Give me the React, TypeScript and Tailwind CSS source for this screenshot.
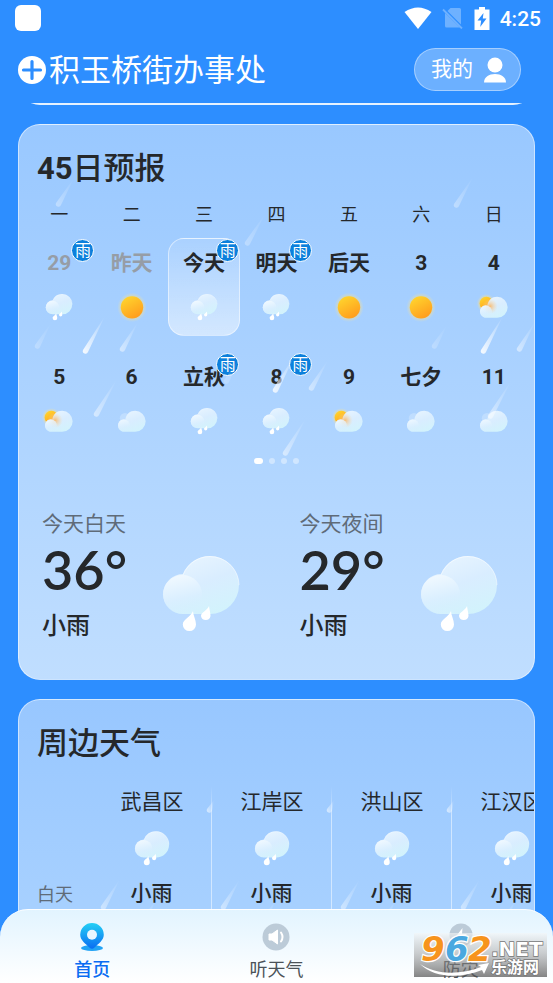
import { useId, useState } from 'react';
import clsx from 'clsx';

type Weather = 'rain' | 'sun' | 'partly' | 'cloudy';

interface Day {
  label: string;
  weather: Weather;
  alert?: boolean;
  past?: boolean;
  today?: boolean;
}

interface Streak {
  x: number;
  y: number;
  dx: number;
  dy: number;
  opacity: number;
}

const weekdays = ['一', '二', '三', '四', '五', '六', '日'];

const days: Day[] = [
  { label: '29', weather: 'rain', alert: true, past: true },
  { label: '昨天', weather: 'sun', past: true },
  { label: '今天', weather: 'rain', alert: true, today: true },
  { label: '明天', weather: 'rain', alert: true },
  { label: '后天', weather: 'sun' },
  { label: '3', weather: 'sun' },
  { label: '4', weather: 'partly' },
  { label: '5', weather: 'partly' },
  { label: '6', weather: 'cloudy' },
  { label: '立秋', weather: 'rain', alert: true },
  { label: '8', weather: 'rain', alert: true },
  { label: '9', weather: 'partly' },
  { label: '七夕', weather: 'cloudy' },
  { label: '11', weather: 'cloudy' },
];

const halves = [
  { title: '今天白天', temp: '36°', text: '小雨' },
  { title: '今天夜间', temp: '29°', text: '小雨' },
];

const districts = ['武昌区', '江岸区', '洪山区', '江汉区'];

const forecastStreaks: Streak[] = [
  { x: 40, y: 80, dx: 15, dy: 27, opacity: 0.35 },
  { x: 229, y: 119, dx: 17, dy: 30, opacity: 0.3 },
  { x: 438, y: 81, dx: 16, dy: 29, opacity: 0.35 },
  { x: 19, y: 222, dx: 13, dy: 24, opacity: 0.25 },
  { x: 67, y: 227, dx: 19, dy: 36, opacity: 0.9 },
  { x: 104, y: 225, dx: 15, dy: 28, opacity: 0.5 },
  { x: 416, y: 222, dx: 12, dy: 22, opacity: 0.25 },
  { x: 465, y: 227, dx: 19, dy: 36, opacity: 0.9 },
  { x: 501, y: 225, dx: 15, dy: 28, opacity: 0.5 },
  { x: 78, y: 290, dx: 20, dy: 36, opacity: 0.5 },
  { x: 208, y: 257, dx: 13, dy: 24, opacity: 0.2 },
  { x: 257, y: 266, dx: 19, dy: 36, opacity: 0.8 },
  { x: 293, y: 264, dx: 16, dy: 29, opacity: 0.45 },
  { x: 267, y: 329, dx: 20, dy: 36, opacity: 0.5 },
  { x: 472, y: 292, dx: 20, dy: 36, opacity: 0.5 },
];

const nearbyStreaks: Streak[] = [82, 202, 322, 442].flatMap((x) => [
  { x: x + 3, y: 208, dx: 16, dy: 29, opacity: 0.45 },
  { x: x + 43, y: 222, dx: 12, dy: 22, opacity: 0.4 },
  { x: x + 109, y: 111, dx: 4, dy: 11, opacity: 0.6 },
]);

function Rain({ streaks }: { streaks: Streak[] }) {
  const id = useId();
  return (
    <svg aria-hidden="true" className="pointer-events-none absolute inset-0 h-full w-full">
      <defs>
        <linearGradient id={id} x1="0" y1="1" x2="1" y2="0">
          <stop offset="0" stopColor="#fff" />
          <stop offset="1" stopColor="#fff" stopOpacity="0" />
        </linearGradient>
      </defs>
      {streaks.map((s) => (
        <path
          key={`${s.x}-${s.y}`}
          d={`M${s.x - 3} ${s.y - 2}L${s.x + s.dx} ${s.y - s.dy}L${s.x + 2} ${s.y}A2.6 2.6 0 0 1 ${s.x - 3} ${s.y - 2}Z`}
          fill={`url(#${id})`}
          opacity={s.opacity}
        />
      ))}
    </svg>
  );
}

function WeatherIcon({ type, className }: { type: Weather; className?: string }) {
  const id = useId();
  const url = (name: string) => `url(#${id}${name})`;

  return (
    <svg viewBox="2 0 80 80" aria-hidden="true" className={clsx('overflow-visible', className)}>
      <defs>
        <linearGradient id={`${id}back`} x1="0.2" y1="0" x2="0.7" y2="1">
          <stop offset="0" stopColor="#e9f5ff" />
          <stop offset="0.5" stopColor="#d9edff" />
          <stop offset="1" stopColor="#d2f3fc" />
        </linearGradient>
        <linearGradient id={`${id}front`} x1="0.35" y1="0" x2="0.6" y2="1">
          <stop offset="0" stopColor="#f1f9ff" />
          <stop offset="0.6" stopColor="#daefff" stopOpacity="0.9" />
          <stop offset="1" stopColor="#d2f1fd" stopOpacity="0" />
        </linearGradient>
        <linearGradient id={`${id}sun`} x1="0.2" y1="0" x2="0.75" y2="1">
          <stop offset="0" stopColor="#ffd62e" />
          <stop offset="1" stopColor="#ff9a1c" />
        </linearGradient>
        <radialGradient id={`${id}glow`}>
          <stop offset="0.6" stopColor="#ffd75e" stopOpacity="0.7" />
          <stop offset="1" stopColor="#ffe9a0" stopOpacity="0" />
        </radialGradient>
        <radialGradient id={`${id}warm`}>
          <stop offset="0" stopColor="#fbb560" stopOpacity="0.85" />
          <stop offset="1" stopColor="#fbd9a8" stopOpacity="0" />
        </radialGradient>
      </defs>

      {type === 'sun' && (
        <>
          <circle cx="42" cy="41" r="42" fill={url('glow')} />
          <circle cx="42" cy="41" r="32" fill={url('sun')} />
        </>
      )}

      {type === 'rain' && (
        <>
          <path
            d="M51 3A29 29 0 1 1 51 61H24A20 20 0 1 1 24.500 21Q27 21 24 21A29 29 0 0 1 51 3Z"
            fill={url('back')}
          />
          <circle cx="23.500" cy="41.500" r="19.500" fill={url('front')} />
          <path d="M24 22A29 29 0 0 1 80 32" fill="none" stroke="#fff" strokeOpacity="0.5" />
          <path d="M34 58C34 62 37 67 37 71.500A6.600 6.600 0 0 1 23.800 71.500C23.800 66 32 64 34 58Z" fill="#fff" />
          <path d="M50 53C50.500 57 51.500 60 51.500 63A4.800 4.800 0 0 1 42 63C42 59 48 58 50 53Z" fill="#fff" />
        </>
      )}

      {(type === 'partly' || type === 'cloudy') && (
        <>
          {type === 'partly' && (
            <>
              <circle cx="20" cy="30" r="27" fill={url('glow')} />
              <circle cx="20" cy="30" r="19" fill={url('sun')} />
            </>
          )}
          {type === 'cloudy' && <circle cx="22" cy="32" r="15" fill="#d2e8ff" fillOpacity="0.5" />}
          <path
            d="M51 11A30 30 0 0 1 51 71H20A18.500 18.500 0 0 1 4 44A17 17 0 0 1 23 36C26 20 36 11 51 11Z"
            fill={url('back')}
          />
          {type === 'partly' && <circle cx="31" cy="38" r="22" fill={url('warm')} />}
          <circle cx="19" cy="53" r="17" fill={url('front')} fillOpacity="0.8" />
        </>
      )}
    </svg>
  );
}

function StatusBar() {
  return (
    <div className="flex h-9 shrink-0 items-center justify-between pr-3 pl-[15px]">
      <span className="size-[26px] rounded-md bg-white" />
      <div className="flex items-center text-white">
        <svg viewBox="0 0 28 22" className="mr-2.5 h-[22px] w-7" fill="currentColor" aria-hidden="true">
          <path d="M14 22L.5 5Q14-4 27.500 5Z" />
        </svg>
        <svg viewBox="0 0 22 22" className="mr-2.5 size-[22px]" aria-hidden="true">
          <path d="M8.500 1H17.500Q19 1 19 2.500V17.500L5.500 4ZM3 6L18 20.500H4.500Q3 20.500 3 19Z" fill="#6eb1ff" />
          <path d="M1 2.500L20 21.500" stroke="#6eb1ff" strokeWidth="1.800" />
        </svg>
        <svg viewBox="0 0 16 23" className="mr-2.5 h-[23px] w-4" aria-hidden="true">
          <path d="M5 0H11V2.500H15.500V23H.5V2.500H5Z" fill="#fff" />
          <path d="M9.500 6L3.500 13.500H7.200L6.200 20L12.500 11.500H8.800Z" fill="#2d8eff" />
        </svg>
        <span className="pt-0.5 text-[21px] leading-6 font-medium">4:25</span>
      </div>
    </div>
  );
}

function Header() {
  return (
    <header className="flex h-[67px] shrink-0 items-center justify-between pr-8 pl-[18px]">
      <button type="button" className="flex items-center gap-[3px] text-white">
        <svg viewBox="0 0 28 28" className="size-7" aria-hidden="true">
          <circle cx="14" cy="14" r="14" fill="#fff" />
          <path d="M14 5.500V22.500M5.500 14H22.500" stroke="#2d8eff" strokeWidth="3.200" strokeLinecap="round" />
        </svg>
        <span className="pt-0.5 text-[31px] leading-10">积玉桥街办事处</span>
      </button>
      <button
        type="button"
        className="flex h-[43px] items-center gap-2.5 rounded-full border border-white/40 bg-white/30 pr-[13px] pl-4 text-[21px] text-white"
      >
        我的
        <svg viewBox="0 0 24 26" className="h-[26px] w-6" fill="currentColor" aria-hidden="true">
          <circle cx="12" cy="8" r="7.500" />
          <path d="M1 25.500C1 20 6 17 12 17S23 20 23 25.500Z" />
        </svg>
      </button>
    </header>
  );
}

function DayCell({ day }: { day: Day }) {
  return (
    <button
      type="button"
      className={clsx(
        'relative flex h-[98px] flex-col items-center rounded-2xl border pt-2.5',
        day.today ? 'border-white/50 bg-linear-to-b from-white/10 to-white/50' : 'border-transparent'
      )}
    >
      <span
        className={clsx(
          'text-[21px] leading-7 font-bold whitespace-nowrap',
          day.past ? 'text-[#969da6]' : 'text-[#25282b]'
        )}
      >
        {day.label}
      </span>
      <WeatherIcon type={day.weather} className="mt-4 size-7" />
      {day.alert && (
        <span className="absolute top-0 right-0 flex size-[23px] items-center justify-center rounded-full border border-white bg-[#0c80dc] text-base leading-none text-white">
          雨
        </span>
      )}
    </button>
  );
}

function ForecastCard() {
  return (
    <section className="relative mx-[18px] mt-[19px] overflow-hidden rounded-[22px] border border-white/50 bg-linear-to-b from-[#99c8ff] to-[#c0deff] px-1 pt-6 pb-[37px]">
      <h2 className="pl-3.5 text-[31px] leading-10 font-medium">
        <span className="font-bold">45</span>日预报
      </h2>
      <div className="mt-3 grid grid-cols-7 text-center text-lg leading-7">
        {weekdays.map((name) => (
          <span key={name}>{name}</span>
        ))}
      </div>
      <div className="mt-[9px] grid grid-cols-7 gap-y-4">
        {days.map((day) => (
          <DayCell key={day.label} day={day} />
        ))}
      </div>
      <div className="mt-2 flex justify-center gap-1.5">
        <span className="h-1.5 w-[9px] rounded-full bg-white" />
        <span className="size-1.5 rounded-full bg-white/40" />
        <span className="size-1.5 rounded-full bg-white/40" />
        <span className="size-1.5 rounded-full bg-white/40" />
      </div>
      <div className="-mx-1 mt-[46px] grid grid-cols-2">
        {halves.map((half) => (
          <div key={half.title} className="flex items-end gap-[34px] pl-[23px]">
            <div>
              <p className="text-[21px] leading-7 text-[#5f6b78]">{half.title}</p>
              <p className="mt-0.5 font-[Lato,sans-serif] text-[54px] leading-[60px] font-semibold">{half.temp}</p>
              <p className="mt-2.5 text-2xl leading-8 font-medium">{half.text}</p>
            </div>
            <WeatherIcon type="rain" className="mb-[9px] size-20 shrink-0" />
          </div>
        ))}
      </div>
      <Rain streaks={forecastStreaks} />
    </section>
  );
}

function NearbyCard() {
  return (
    <section className="relative mx-[18px] mt-[19px] overflow-hidden rounded-[22px] border border-white/50 bg-linear-to-b from-[#98c7ff] to-[#add4ff] pt-6 pb-20">
      <h2 className="pl-[18px] text-[31px] leading-10 font-medium">周边天气</h2>
      <table className="mt-[22px] w-[553px] table-fixed border-separate border-spacing-0">
        <thead>
          <tr>
            <td className="w-[73px]" />
            {districts.map((name) => (
              <th
                key={name}
                scope="col"
                className="bg-[linear-gradient(to_bottom,transparent,rgba(255,255,255,0.5))] bg-[length:1px_100%] bg-right bg-no-repeat pt-0.5 text-[21px] leading-7 font-normal"
              >
                {name}
              </th>
            ))}
          </tr>
        </thead>
        <tbody>
          <tr>
            <th
              scope="row"
              className="pb-2 pl-[18px] text-left align-bottom text-lg leading-6 font-normal text-[#5f6b78]"
            >
              白天
            </th>
            {districts.map((name) => (
              <td key={name} className="border-r border-white/50 pt-3.5 pb-2 text-center">
                <WeatherIcon type="rain" className="mx-auto size-9" />
                <span className="mt-[13px] block text-[21px] leading-7 font-medium">小雨</span>
              </td>
            ))}
          </tr>
        </tbody>
      </table>
      <Rain streaks={nearbyStreaks} />
    </section>
  );
}

function HomeIcon() {
  return (
    <svg viewBox="0 0 28 30" className="h-[30px] w-7" aria-hidden="true">
      <defs>
        <linearGradient id="pin" x1="0" y1="0" x2="0" y2="1">
          <stop offset="0" stopColor="#24d0f5" />
          <stop offset="1" stopColor="#0a6cf2" />
        </linearGradient>
      </defs>
      <ellipse cx="14" cy="26" rx="11" ry="3" fill="#22a3f5" />
      <path
        d="M14 1A11.800 11.800 0 0 1 25.800 12.800C25.800 18.500 20 22 16.500 25.500Q14 28 11.500 25.500C8 22 2.200 18.500 2.200 12.800A11.800 11.800 0 0 1 14 1Z"
        fill="url(#pin)"
      />
      <circle cx="14" cy="12.800" r="5" fill="#e8f6ff" />
    </svg>
  );
}

function ListenIcon() {
  return (
    <svg viewBox="0 0 28 30" className="h-[30px] w-7" aria-hidden="true">
      <circle cx="14" cy="15" r="13.500" fill="#bccbd8" />
      <path d="M7 12H10L15.500 8V22L10 18H7Z" fill="#fff" stroke="#fff" strokeLinejoin="round" />
      <path d="M19 10.500Q22 15 19 19.500" stroke="#fff" strokeWidth="2" fill="none" strokeLinecap="round" />
    </svg>
  );
}

function DisasterIcon() {
  return (
    <svg viewBox="0 0 28 30" className="h-[30px] w-7" aria-hidden="true">
      <circle cx="14" cy="13" r="11.500" fill="#bccbd8" />
      <path d="M15.500 6L8.500 15H13L11.500 21.500L20 12H15Z" fill="#fff" />
    </svg>
  );
}

const tabs = [
  { name: '首页', Icon: HomeIcon },
  { name: '听天气', Icon: ListenIcon },
  { name: '防灾', Icon: DisasterIcon },
];

function TabBar() {
  const [active, setActive] = useState('首页');

  return (
    <nav className="relative z-10 -mt-8 grid h-[74px] shrink-0 grid-cols-3 rounded-t-[28px] border-t border-white bg-linear-to-b from-[#e2f4ff] to-white">
      {tabs.map(({ name, Icon }) => (
        <button
          key={name}
          type="button"
          onClick={() => setActive(name)}
          className={clsx(
            'flex flex-col items-center pt-3 text-lg leading-6',
            active === name ? 'font-medium text-[#0a6cf2]' : 'text-[#4b5258]'
          )}
        >
          <Icon />
          <span className="mt-1.5">{name}</span>
        </button>
      ))}
    </nav>
  );
}

function Watermark() {
  return (
    <svg
      viewBox="0 0 133 44"
      className="pointer-events-none absolute right-1.5 bottom-1.5 z-20 h-11 w-[133px]"
      aria-hidden="true"
    >
      <defs>
        <linearGradient id="plate" x1="0" y1="0" x2="0" y2="1">
          <stop offset="0" stopColor="#f4f6f7" stopOpacity="0.6" />
          <stop offset="0.45" stopColor="#a8a8a8" stopOpacity="0.55" />
          <stop offset="1" stopColor="#505050" stopOpacity="0.7" />
        </linearGradient>
      </defs>
      <rect width="133" height="44" fill="url(#plate)" />
      <path d="M6 31C22 42 46 42 67 34L64 32L75 30L70 41L68 37C46 46 20 45 6 31Z" fill="#fff" />
      <g
        className="font-['DejaVu_Sans',sans-serif] font-bold italic"
        fontSize="34"
        stroke="#fff"
        strokeWidth="2.500"
        paintOrder="stroke"
      >
        <text x="7" y="28" fill="#f7941d">9</text>
        <text x="31" y="28" fill="#4aa8e0">6</text>
        <text x="54" y="28" fill="#f7941d">2</text>
      </g>
      <g fill="#fff" stroke="#777" strokeWidth="1.500" paintOrder="stroke">
        <text x="77" y="23" fontSize="20" className="font-['DejaVu_Sans',sans-serif] font-bold">.NET</text>
        <text x="77" y="40" fontSize="16" className="font-['Noto_Sans_CJK_SC',sans-serif] font-bold">乐游网</text>
      </g>
    </svg>
  );
}

export default function App() {
  return (
    <div className="relative flex h-screen flex-col overflow-hidden bg-[#2d8eff] font-[Roboto,'Noto_Sans_CJK_SC',sans-serif] text-[#25282b]">
      <StatusBar />
      <Header />
      <main className="min-h-0 flex-1 overflow-y-auto [scrollbar-width:none]">
        {/* tail of the card scrolled under the header */}
        <div className="mx-[18px] flex h-0.5 items-end overflow-hidden">
          <div className="h-16 w-full shrink-0 rounded-b-[22px] border-b-2 border-white/60 bg-[#c0deff]" />
        </div>
        <ForecastCard />
        <NearbyCard />
      </main>
      <TabBar />
      <Watermark />
    </div>
  );
}
